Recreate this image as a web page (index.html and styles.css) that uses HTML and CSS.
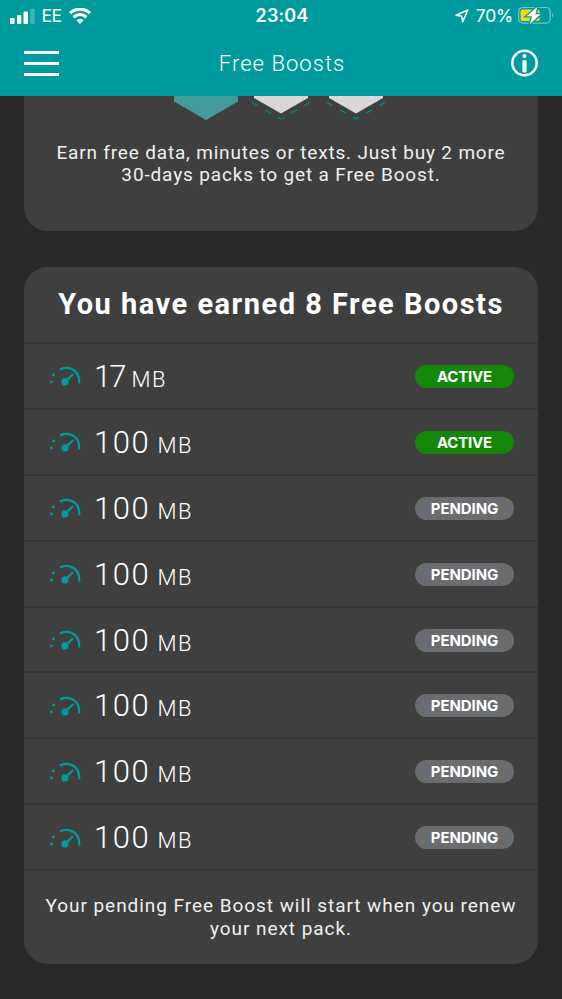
FILE: index.html
```
<!DOCTYPE html>
<html lang="en">
<head>
<meta charset="utf-8">
<title>Free Boosts</title>
<link rel="stylesheet" href="styles.css">
</head>
<body>
<svg class="defs" width="0" height="0">
  <symbol id="gauge" viewBox="0 0 32 22">
    <path d="M10.8 3.1C19-.3 29.6 4 29.2 16.4" fill="none" stroke="#009c9d" stroke-width="2.3" stroke-linecap="round"/>
    <path d="M15.2 15.7L22.4 8.7" stroke="#009c9d" stroke-width="2.3" stroke-linecap="round"/>
    <circle cx="14.9" cy="15.9" r="3.6" fill="#009c9d"/>
    <circle cx="3.5" cy="8.9" r="1.4" fill="#009c9d"/>
    <circle cx="1.4" cy="15.9" r="1.4" fill="#009c9d"/>
  </symbol>
</svg>
<header class="top">
  <div class="status">
    <div class="side">
      <svg width="25" height="17" viewBox="0 0 25 17" fill="#fff"><rect y="10" width="4.6" height="6" rx="1"/><rect x="7" y="7" width="4.4" height="9" rx="1"/><rect x="13.5" y="3.5" width="4.5" height="12.5" rx="1"/><rect x="20.3" y="0.7" width="4.4" height="15.3" rx="1" opacity=".25"/></svg>
      <span class="carrier">EE</span>
      <svg width="22" height="17" viewBox="0 0 22 17" fill="none" stroke="#fff" stroke-width="3.2"><path d="M1 5.2C6.8-.3 15.2-.3 21 5.2"/><path d="M4.6 9.300C8.400 5.800 13.600 5.800 17.400 9.300"/><path d="M7.400 12.300C9.500 10.400 12.500 10.400 14.600 12.300L11 16Z" fill="#fff" stroke="none"/></svg>
    </div>
    <span class="clock">23:04</span>
    <div class="side right">
      <svg class="loc" width="14" height="14" viewBox="0 0 14 14" fill="none" stroke="#fff" stroke-width="1.5" stroke-linejoin="round"><path d="M12.9 .9L1 6.2L6.7 7.3L7.7 12.8Z"/></svg>
      <span class="percent">70%</span>
      <svg width="36" height="20" viewBox="0 0 36 20"><rect x=".7" y="1.5" width="31.5" height="15.6" rx="4.2" fill="none" stroke="#fff" stroke-opacity=".45" stroke-width="1.2"/><path d="M34 6.8Q36.200 9.300 34 11.800Z" fill="#fff" opacity=".45"/><rect x="2.6" y="3.5" width="19" height="11.6" rx="2.2" fill="#ffd60a"/><path d="M19.500 .8L8.500 10.300H13.900L12 18L22.700 8.300H17.300Z" fill="#fff" stroke="#009c9d" stroke-width="2.600" paint-order="stroke"/></svg>
    </div>
  </div>
  <nav class="nav">
    <div class="burger"><i></i><i></i><i></i></div>
    <h1>Free Boosts</h1>
    <svg class="info" width="28" height="28" viewBox="0 0 28 28" fill="#fff"><circle cx="14.500" cy="14" r="12.2" fill="none" stroke="#fff" stroke-width="2.5"/><circle cx="14.500" cy="7.1" r="2"/><rect x="12.400" y="11" width="4.2" height="12.4" rx="1.5"/></svg>
  </nav>
</header>
<main>
  <section class="card progress">
    <svg class="hexes" width="214" height="25" viewBox="0 0 214 25">
      <path d="M0 0H64V5.5L32 24L0 5.5Z" fill="#449b9b"/>
      <g id="hex"><path d="M80 0H134V2L107 17.5L80 2Z" fill="#d8d8d8"/><path d="M77.7 6.2L83.5 9.5M91 13.8L97 17.2M104 21.2L107 22.8L110 21.2M117 17.2L123 13.8M130.5 9.5L136 6.2" fill="none" stroke="#007f83" stroke-width="1.7"/></g>
      <use href="#hex" x="75"/>
    </svg>
    <p><span class="earn-one">Earn free data, minutes or texts. Just buy 2 more</span><br><span class="earn-two">30-days packs to get a Free Boost.</span></p>
  </section>
  <section class="card boosts">
    <h2>You have earned 8 Free Boosts</h2>
    <ul>
      <li><svg class="gauge"><use href="#gauge"/></svg><span class="amount short">17</span><span class="unit">MB</span><b class="badge active">ACTIVE</b></li>
      <li><svg class="gauge"><use href="#gauge"/></svg><span class="amount">100</span><span class="unit">MB</span><b class="badge active">ACTIVE</b></li>
      <li><svg class="gauge"><use href="#gauge"/></svg><span class="amount">100</span><span class="unit">MB</span><b class="badge">PENDING</b></li>
      <li><svg class="gauge"><use href="#gauge"/></svg><span class="amount">100</span><span class="unit">MB</span><b class="badge">PENDING</b></li>
      <li><svg class="gauge"><use href="#gauge"/></svg><span class="amount">100</span><span class="unit">MB</span><b class="badge">PENDING</b></li>
      <li><svg class="gauge"><use href="#gauge"/></svg><span class="amount">100</span><span class="unit">MB</span><b class="badge">PENDING</b></li>
      <li><svg class="gauge"><use href="#gauge"/></svg><span class="amount">100</span><span class="unit">MB</span><b class="badge">PENDING</b></li>
      <li><svg class="gauge"><use href="#gauge"/></svg><span class="amount">100</span><span class="unit">MB</span><b class="badge">PENDING</b></li>
    </ul>
    <p class="note"><span class="note-one">Your pending Free Boost will start when you renew</span><br><span class="note-two">your next pack.</span></p>
  </section>
</main>
</body>
</html>
```
FILE: styles.css
```
* { box-sizing: border-box; margin: 0; padding: 0; }
html, body { height: 999px; overflow: hidden; }
body { background: #292929; color: #fff; font-family: Roboto, "Liberation Sans", sans-serif; }
svg { display: block; flex: none; }
.defs { position: absolute; }
.top { height: 96px; background: #009c9d; }
.status { height: 32px; display: grid; grid-template-columns: 1fr auto 1fr; align-items: center; padding: 0 8px 0 10px; font-family: Inter, sans-serif; font-size: 17.5px; line-height: 32px; }
.side { display: flex; align-items: center; }
.right { justify-content: flex-end; }
.carrier { margin: 0 7.5px 0 6.5px; letter-spacing: -0.6px; }
.clock { font-weight: 600; letter-spacing: 0.1px; font-size: 18px; }
.percent { margin: 0 5px 0 7px; letter-spacing: -0.2px; }
.nav { height: 62px; display: grid; grid-template-columns: 35px 1fr 28px; align-items: center; padding: 0 24px; }
.burger { display: grid; gap: 8px; }
.burger i { height: 3px; background: #fff; }
h1 { font-weight: 300; font-size: 22px; letter-spacing: 1.05px; text-align: center; padding-left: 2px; padding-right: 7px; }
main { padding: 0 24px; }
.card { background: #3f3f3f; overflow: hidden; text-align: center; }
.progress { height: 135px; border-radius: 0 0 24px 24px; }
.hexes { margin-left: 150px; }
p { font-size: 19px; font-weight: 400; line-height: 22.5px; white-space: nowrap; letter-spacing: 0.82px; color: #f0f0f0; }
.progress p { margin-top: 20.5px; }
.earn-two { letter-spacing: 0.85px; }
.boosts { margin-top: 36px; height: 697px; border-radius: 24px; }
h2 { height: 75px; line-height: 74px; font-size: 29px; font-weight: 700; letter-spacing: 1.5px; white-space: nowrap; }
ul { list-style: none; }
li { height: 65.9px; border-top: 2px solid #363636; display: flex; align-items: baseline; padding: 0 24px 0 26px; line-height: 66px; }
.gauge { width: 32px; height: 22px; align-self: center; margin-top: 3px; }
.amount { font-size: 31px; font-weight: 300; letter-spacing: 1.5px; margin-left: 12px; width: 56px; text-align: left; }
.short { width: 30px; letter-spacing: -2px; }
.unit { font-size: 22px; font-weight: 300; margin-left: 7.5px; letter-spacing: 1.5px; }
.badge { width: 99px; height: 23px; line-height: 23px; border-radius: 12px; background: #6b6c6f; margin: 1px 0 0 auto; align-self: center; font-family: Inter, sans-serif; font-size: 15px; font-weight: 700; letter-spacing: -0.1px; }
.active { background: #138808; letter-spacing: -0.2px; }
.note { border-top: 2px solid #363636; padding-top: 24px; }
.note-one { letter-spacing: 0.95px; }
.note-two { letter-spacing: 0.95px; }
```
